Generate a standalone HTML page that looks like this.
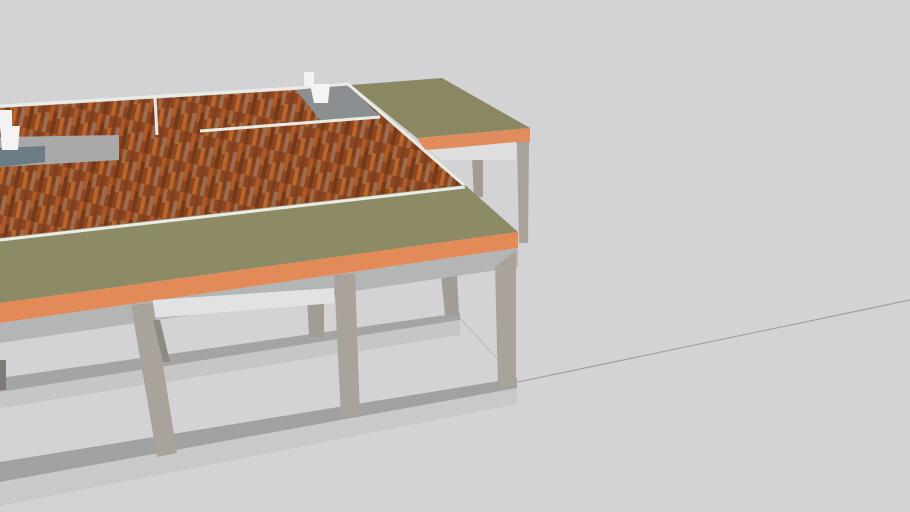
<!DOCTYPE html>
<html><head><style>html,body{margin:0;padding:0;background:#d3d3d5;}svg{display:block}</style></head>
<body>
<svg width="910" height="512" viewBox="0 0 910 512" xmlns="http://www.w3.org/2000/svg">
<defs>
<pattern id="wood" width="24" height="30" patternUnits="userSpaceOnUse" patternTransform="rotate(12)">
<rect width="24" height="30" fill="#8e4620"/>
<rect x="0" y="0" width="4" height="18" fill="#ad5a28"/>
<rect x="4" y="8" width="4" height="22" fill="#733a1a"/>
<rect x="8" y="0" width="4" height="14" fill="#a06a45"/>
<rect x="12" y="12" width="4" height="18" fill="#b8662c"/>
<rect x="16" y="0" width="4" height="20" fill="#7e4020"/>
<rect x="20" y="10" width="4" height="20" fill="#9e6c4e"/>
</pattern>
</defs>
<rect width="910" height="512" fill="#d3d3d5"/>
<line x1="518" y1="382" x2="910" y2="300" stroke="#9a9a9c" stroke-width="1"/>
<line x1="460" y1="318" x2="518" y2="382" stroke="#b8b8ba" stroke-width="1"/>
<polygon points="0,378 460,313 460,320 0,392" fill="#a3a5a4"/>
<polygon points="0,392 460,320 460,335 0,408" fill="#c4c7c5"/>
<polygon points="307,297 324,297 324,337 309,337" fill="#a29c95"/>
<polygon points="441,275 457,275 459,315 445,315" fill="#a29c95"/>
<polygon points="472,158 483,158 483,197 474,197" fill="#a29c95"/>
<polygon points="0,360 6,360 6,390 0,390" fill="#7f7a76"/>
<polygon points="351,85 442,78 530,128 417,138" fill="#8b8763"/>
<polygon points="417,138 530,128 530,142 425,150" fill="#e08c5c"/>
<polygon points="430,150 516,142 516,160 441,160" fill="#dedede"/>
<polygon points="517,142 529,142 528,243 519,243" fill="#a8a29b"/>
<polygon points="0,108 296,90 348,85 465,185 0,238" fill="url(#wood)"/>
<polygon points="296,90 348,85 382,118 320,120" fill="#8c8f92"/>
<polygon points="0,137 119,135 119,160 0,167" fill="#a9a9a9"/>
<polygon points="0,148 45,146 45,162 0,167" fill="#6d7d86"/>
<polyline points="0,106 296,88 348,84 465,186" fill="none" stroke="#e8ece6" stroke-width="3"/>
<line x1="155" y1="98" x2="157" y2="135" stroke="#e8ece6" stroke-width="3"/>
<line x1="200" y1="131" x2="380" y2="117" stroke="#e8ece6" stroke-width="3"/>
<rect x="304" y="72" width="10" height="14" fill="#f2f2f2"/>
<polygon points="310,84 330,84 328,103 314,103" fill="#f4f4f4"/>
<rect x="0" y="110" width="12" height="18" fill="#f2f2f2"/>
<polygon points="0,126 20,126 18,150 2,150" fill="#f4f4f4"/>
<polygon points="0,238 465,185 518,232 0,303" fill="#8d8a66"/>
<polyline points="0,240 465,187" fill="none" stroke="#e8ece6" stroke-width="3"/>
<polygon points="0,303 518,232 518,248 0,323" fill="#e28a58"/>
<polygon points="0,323 518,248 518,267 0,343" fill="#b4b6b5"/>
<polygon points="153,300 334,288 334,303 153,318" fill="#e2e2e2"/>
<polygon points="0,462 517,378 517,388 0,482" fill="#a0a2a1"/>
<polygon points="0,482 517,388 517,404 0,506" fill="#c7cac8"/>
<polygon points="131,305 153,303 177,453 157,457" fill="#aaa39b"/>
<polygon points="334,275 355,273 360,417 341,417" fill="#aaa39b"/>
<polygon points="495,267 516,250 516,385 498,387" fill="#aaa39b"/>
<polygon points="153,320 160,320 170,362 163,362" fill="#8f8a84"/>
</svg>
</body></html>
